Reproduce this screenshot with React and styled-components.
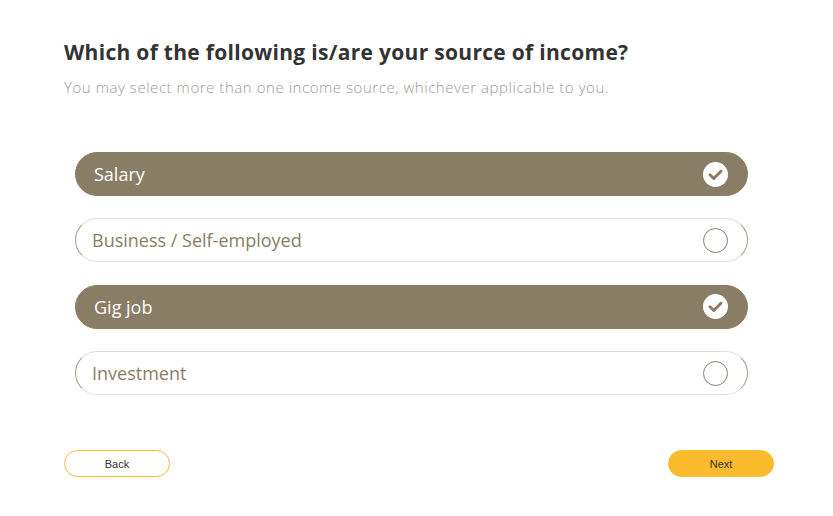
import React, { useState } from 'react';
import styled, { createGlobalStyle, css } from 'styled-components';

const GlobalStyle = createGlobalStyle`
  html, body {
    margin: 0;
    padding: 0;
    background: #ffffff;
    font-family: "Open Sans", Lato, sans-serif;
  }
`;

const Page = styled.div`
  width: 833px;
  height: 516px;
  box-sizing: border-box;
  padding: 37px 59px 0 64px;
  display: flex;
  flex-direction: column;
`;

const Title = styled.h1`
  margin: 0;
  font-size: 21px;
  font-weight: 700;
  color: #333333;
  line-height: 30px;
  letter-spacing: 0.3px;
`;

const Subtitle = styled.p`
  margin: 10px 0 0;
  font-size: 15px;
  font-weight: 300;
  color: #9a9a9a;
  line-height: 20px;
  letter-spacing: 0.55px;
`;

const OptionList = styled.div`
  margin: 55px 26px 0 11px;
  display: flex;
  flex-direction: column;
  gap: 22.4px;
`;

const Option = styled.button`
  height: 44px;
  box-sizing: border-box;
  border-radius: 22px;
  display: flex;
  align-items: center;
  justify-content: space-between;
  padding: 0 19px 0 16px;
  font-family: inherit;
  font-size: 18px;
  cursor: pointer;
  text-align: left;
  ${p =>
    p.$selected
      ? css`
          background: #8a7d66;
          border: 1px solid #8a7d66;
          color: #ffffff;
          padding-left: 18px;
        `
      : css`
          background: #ffffff;
          border: 1px solid #dedede;
          border-left-color: #a89c88;
          border-right-color: #a89c88;
          color: #8a7d66;
        `}
`;

const Circle = styled.span`
  width: 25px;
  height: 25px;
  box-sizing: border-box;
  border-radius: 50%;
  border: 1.5px solid #8a7d66;
`;

const Check = () => (
  <svg width="25" height="25" viewBox="0 0 25 25">
    <circle cx="12.5" cy="12.5" r="12.5" fill="#ffffff" />
    <path
      d="M7 12.8 L10.8 16.5 L18 9.2"
      fill="none"
      stroke="#8a7d66"
      strokeWidth="3"
      strokeLinecap="round"
      strokeLinejoin="round"
    />
  </svg>
);

const Footer = styled.div`
  margin-top: auto;
  margin-bottom: 39px;
  display: flex;
  justify-content: space-between;
`;

const NavButton = styled.button`
  width: 106px;
  height: 27px;
  box-sizing: border-box;
  border-radius: 14px;
  border: 1px solid #fbbb2d;
  font-family: "Liberation Sans", Arial, sans-serif;
  font-size: 11px;
  color: #333333;
  cursor: pointer;
  background: ${p => (p.$primary ? '#fbbb2d' : '#ffffff')};
`;

const sources = ['Salary', 'Business / Self-employed', 'Gig job', 'Investment'];

export default function App() {
  const [selected, setSelected] = useState(['Salary', 'Gig job']);

  const toggle = name =>
    setSelected(s => (s.includes(name) ? s.filter(x => x !== name) : [...s, name]));

  return (
    <>
      <GlobalStyle />
      <Page>
        <Title>Which of the following is/are your source of income?</Title>
        <Subtitle>
          You may select more than one income source, whichever applicable to you.
        </Subtitle>
        <OptionList>
          {sources.map(name => {
            const on = selected.includes(name);
            return (
              <Option key={name} $selected={on} onClick={() => toggle(name)}>
                {name}
                {on ? <Check /> : <Circle />}
              </Option>
            );
          })}
        </OptionList>
        <Footer>
          <NavButton>Back</NavButton>
          <NavButton $primary>Next</NavButton>
        </Footer>
      </Page>
    </>
  );
}
